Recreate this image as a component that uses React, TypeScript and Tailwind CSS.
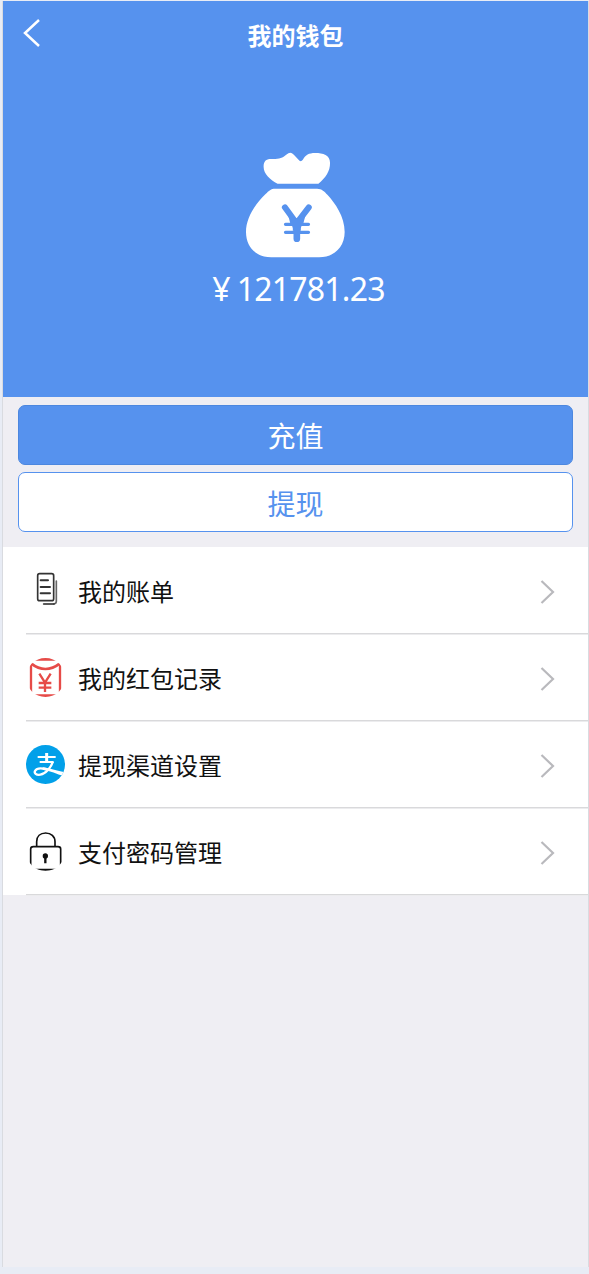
import type { ReactNode } from "react";

interface MenuItem {
  label: string;
  icon: ReactNode;
}

const MoneyBag = () => (
  <svg className="w-[99px] h-[106px]" viewBox="78 66 298 318" preserveAspectRatio="none" fill="#fff">
    <path d="M173 161C151 149 131 132 131 110C131 94 138 87 153 87C176 88 188 84 199 74C209 66 214 66 222 74L239 92C243 95 247 93 250 88C257 75 267 69 286 69C310 69 331 75 331 99C331 124 318 143 296 161Z" />
    <path d="M166 176H292C306 176 315 185 323 194C346 219 375 259 375 306C375 351 343 382 298 382H154C109 382 78 351 78 306C78 266 103 225 137 192C147 182 153 176 166 176Z" />
    <g fill="none" stroke="#5692ee" strokeLinecap="round">
      <path strokeWidth="18" strokeLinejoin="round" d="M195 232L230 280L267 232" />
      <path strokeWidth="20" d="M231 276V326" />
      <path strokeWidth="10" d="M197 283H266M197 307H266" />
    </g>
    <path fill="#5692ee" d="M204 252L222 264Q231 270 240 264L258 252L250 283Q242 288 243 302H219Q220 288 212 283Z" />
  </svg>
);

const BillIcon = () => (
  <svg className="size-[39px]" viewBox="0 0 117 117" fill="none" stroke="#333" strokeLinecap="round">
    <rect x="35" y="8" width="48" height="81" rx="6" strokeWidth="5" />
    <path strokeWidth="6" d="M44 28H66M44 48H72M44 67H72" />
    <path strokeWidth="5" stroke="#666" d="M91 30V91Q91 98 84 99" />
    <path strokeWidth="5" stroke="#222" d="M53 99H84" />
  </svg>
);

const RedPacketIcon = () => (
  <svg className="size-[39px] rounded-full" viewBox="0 0 117 117" fill="none" stroke="#e64b48">
    <path strokeWidth="9" d="M0 4H117M0 113H117" />
    <path strokeWidth="7" d="M15 10V107M102 10V107" />
    <path strokeWidth="8" d="M15 16Q58 50 102 16" />
    <path strokeWidth="7" d="M40 47L57 74L74 47M57 74V102M38 75H76M38 89H76" />
  </svg>
);

const AlipayIcon = () => (
  <svg className="size-[39px] rounded-full" viewBox="0 0 117 117" fill="none" stroke="#fff">
    <rect width="117" height="117" fill="#02a0e9" stroke="none" />
    <path strokeWidth="6" d="M35 36H89M41 51H82" />
    <path strokeWidth="9" d="M62 24V51" />
    <path strokeWidth="7" d="M81 49C76 66 60 86 43 89C30 91 24 84 27 78C32 69 46 69 58 72" />
    <path fill="#fff" stroke="none" d="M50 67C68 68 88 77 119 82L113 93C92 87 74 77 50 74Z" />
  </svg>
);

const LockIcon = () => (
  <svg className="size-[39px] rounded-full" viewBox="0 0 117 117" fill="none" stroke="#111">
    <path strokeWidth="5" d="M32 43V29C32 13 43 3 59 3C75 3 87 13 87 29V43" />
    <path strokeWidth="5" d="M14 110V51Q14 44 22 44H96Q104 44 104 51V110" />
    <path strokeWidth="6" d="M0 113H117" />
    <circle cx="58" cy="72" r="8" fill="#111" stroke="none" />
    <path strokeWidth="7" d="M58 72V94" />
  </svg>
);

const items: MenuItem[] = [
  { label: "我的账单", icon: <BillIcon /> },
  { label: "我的红包记录", icon: <RedPacketIcon /> },
  { label: "提现渠道设置", icon: <AlipayIcon /> },
  { label: "支付密码管理", icon: <LockIcon /> },
];

export default function App() {
  return (
    <div className="w-[589px] h-[1274px] overflow-hidden bg-[#e8ecf5] pt-px font-['Noto_Sans','Noto_Sans_CJK_SC',sans-serif]">
      <div className="ml-[2px] w-[587px] h-[1266px] border-x border-[#d9dbe0] bg-[#efeef3]">
        {/* Cabecera */}
        <div className="h-[396px] bg-[#5692ee] text-white flex flex-col items-center">
          <div className="h-[68px] w-full grid grid-cols-[60px_1fr_60px] items-center">
            <button className="pl-[20px] pb-[4px]">
              <svg className="w-[18px] h-[28px]" viewBox="0 0 18 28" fill="none" stroke="#fff" strokeWidth="2.5">
                <path d="M16 1L2 14L16 27" />
              </svg>
            </button>
            <h1 className="pt-[2px] text-center text-[24px] leading-[34px] font-bold">我的钱包</h1>
          </div>
          <div className="mt-[83px]">
            <MoneyBag />
          </div>
          <div className="mt-[8px] ml-[6px] flex gap-[7px] text-[32px] leading-[46px] tracking-[-0.8px] whitespace-nowrap">
            <span>¥</span>
            <span>121781.23</span>
          </div>
        </div>

        {/* Botones */}
        <div className="h-[150px] px-[15px] pt-[8px] flex flex-col gap-[7px] text-[28px]">
          <button className="h-[60px] pt-[2px] rounded-[7px] border border-[#4c87df] bg-[#5692ee] text-white">充值</button>
          <button className="h-[60px] pt-[4px] rounded-[7px] border border-[#5692ee] bg-white text-[#5692ee]">提现</button>
        </div>

        {/* Menú */}
        <ul className="bg-white">
          {items.map((item) => (
            <li key={item.label} className="h-[87px] pl-[23px]">
              <div className="h-full pt-[1px] border-b border-[#d9d9db] shadow-[0_1px_0_#ececee] flex items-center">
                {item.icon}
                <span className="ml-[13px] pt-[2px] flex-1 text-[24px] text-[#111]">{item.label}</span>
                <svg className="mt-[2px] mr-[33px] w-[15px] h-[24px]" viewBox="0 0 15 24" fill="none" stroke="#b9b9bd" strokeWidth="2.2">
                  <path d="M1.5 1L13 12L1.5 23" />
                </svg>
              </div>
            </li>
          ))}
        </ul>
      </div>
    </div>
  );
}
